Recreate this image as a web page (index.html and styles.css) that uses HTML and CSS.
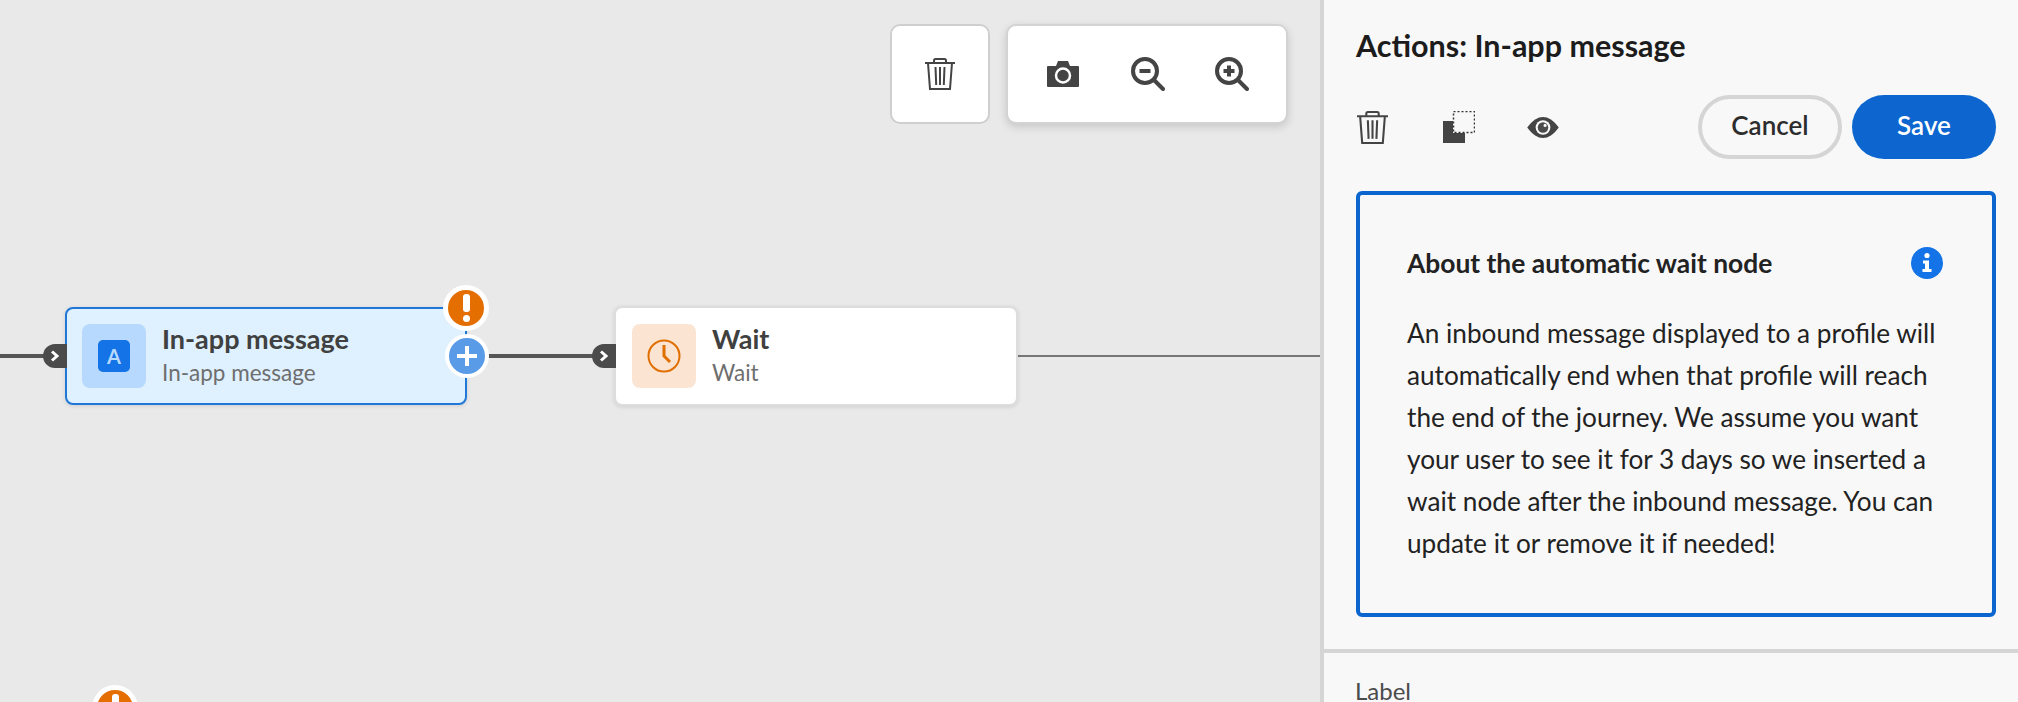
FILE: index.html
```html
<!DOCTYPE html>
<html>
<head>
<meta charset="utf-8">
<meta name="viewport" content="width=device-width, initial-scale=1">
<title>Journey canvas</title>
<link rel="stylesheet" href="styles.css">
</head>
<body>
<main class="canvas">
  <div class="tools">
    <div class="tool-box tool-single">
      <svg class="ico-trash" width="30" height="32" viewBox="0 0 30 32"><path d="M0 5H30M9 5V2.500Q9 1 10.500 1H19.500Q21 1 21 2.500V5M3 5L5 31H25L27 5M10.500 9L11.200 27M15 9V27M19.500 9L18.800 27"/></svg>
    </div>
    <div class="tool-box tool-group">
      <svg width="32" height="26" viewBox="0 0 32 26"><path class="fill" d="M0 6Q0 5 1 5H9L11 0H21L23 5H31Q32 5 32 6V25Q32 26 31 26H1Q0 26 0 25Z"/><circle cx="16" cy="14.500" r="7" fill="none" stroke="#fff" stroke-width="2.500"/></svg>
      <svg class="ico-zoom" width="34" height="34" viewBox="0 0 34 34"><circle cx="14" cy="14" r="12"/><path d="M23 23L32 32"/><path class="mark" d="M8.500 14H19.500"/></svg>
      <svg class="ico-zoom" width="34" height="34" viewBox="0 0 34 34"><circle cx="14" cy="14" r="12"/><path d="M23 23L32 32"/><path class="mark" d="M8.500 14H19.500M14 8.500V19.500"/></svg>
    </div>
  </div>

  <div class="line line-a"></div>
  <div class="line line-b"></div>
  <div class="line line-c"></div>

  <div class="node node-message">
    <span class="pill"><svg width="10" height="12" viewBox="0 0 10 12"><path d="M2 1.500L7 6L2 10.500"/></svg></span>
    <div class="node-icon"><span class="app-a">A</span></div>
    <div class="node-text">
      <div class="node-title">In-app message</div>
      <div class="node-sub">In-app message</div>
    </div>
  </div>

  <div class="node node-wait">
    <span class="pill"><svg width="10" height="12" viewBox="0 0 10 12"><path d="M2 1.500L7 6L2 10.500"/></svg></span>
    <div class="node-icon">
      <svg class="ico-clock" width="34" height="34" viewBox="0 0 34 34"><circle cx="17" cy="17" r="15.500"/><path d="M17 6V17L23 23"/></svg>
    </div>
    <div class="node-text">
      <div class="node-title">Wait</div>
      <div class="node-sub">Wait</div>
    </div>
  </div>

  <span class="alert alert-node"><span class="alert-bar"></span><span class="alert-dot"></span></span>
  <span class="alert alert-low"><span class="alert-bar"></span><span class="alert-dot"></span></span>
  <span class="plus"><svg width="22" height="22" viewBox="0 0 22 22"><path d="M11 1V21M1 11H21"/></svg></span>
</main>

<aside class="panel">
  <div class="panel-head">
    <h1>Actions: In-app message</h1>
    <div class="panel-actions">
      <svg class="ico-trash" width="31" height="33" viewBox="0 0 30 32"><path d="M0 5H30M9 5V2.500Q9 1 10.500 1H19.500Q21 1 21 2.500V5M3 5L5 31H25L27 5M10.500 9L11.200 27M15 9V27M19.500 9L18.800 27"/></svg>
      <svg class="ico-copy" width="32" height="32" viewBox="0 0 32 32"><path class="fill" d="M0 10H10V22H22V32H0Z"/><rect x="10.500" y="0.500" width="21" height="21" fill="none" stroke="#333" stroke-width="1.500" stroke-dasharray="2 2"/></svg>
      <svg class="ico-eye" width="32" height="21" viewBox="0 0 30 20"><path class="fill" d="M0 10C5 3 10 0 15 0S25 3 30 10C25 17 20 20 15 20S5 17 0 10Z"/><circle cx="15" cy="10" r="7" fill="#f8f8f8"/><circle cx="15" cy="10" r="5" fill="#4b4b4b"/><circle cx="17" cy="8" r="1.500" fill="#f8f8f8"/></svg>
      <button class="btn btn-cancel" type="button">Cancel</button>
      <button class="btn btn-save" type="button">Save</button>
    </div>
    <section class="about">
      <div class="about-head">
        <h2>About the automatic wait node</h2>
        <svg width="32" height="32" viewBox="0 0 32 32"><circle cx="16" cy="16" r="16" fill="#1473e6"/><circle cx="16" cy="8.500" r="2.600" fill="#fff"/><path d="M12 13.500H18V22H20.500V25H11.500V22H14V16.500H12Z" fill="#fff"/></svg>
      </div>
      <p>An inbound message displayed to a profile will automatically end when that profile will reach the end of the journey. We assume you want your user to see it for 3 days so we inserted a wait node after the inbound message. You can update it or remove it if needed!</p>
    </section>
  </div>
  <div class="panel-form">
    <label class="field-label">Label</label>
  </div>
</aside>
</body>
</html>
```

FILE: styles.css
```css
* {box-sizing: border-box}

html, body {
  margin: 0;
  height: 702px;
  overflow: hidden;
}

body {
  display: flex;
  font-family: "Lato", "Open Sans", sans-serif;
  background-color: #e9e9e9;
}

svg {
  display: block;
  flex: none;
}

.fill {
  fill: #444;
}

/* canvas */
.canvas {
  position: relative;
  width: 1320px;
  flex: none;
  height: 702px;
  overflow: hidden;
}

.tools {
  position: absolute;
  top: 24px;
  right: 32px;
  display: flex;
  gap: 16px;
}

.tool-box {
  height: 100px;
  display: flex;
  align-items: center;
  justify-content: center;
  background-color: #fff;
  border: 2px solid #cfcfcf;
  border-radius: 10px;
}

.tool-single {
  width: 100px;
}

.tool-group {
  width: 282px;
  gap: 50px;
  padding-left: 2px;
  border-color: #d3d3d3;
  box-shadow: 0 3px 8px rgba(0, 0, 0, 0.15);
}

.tool-group svg:first-child {
  margin-right: 2px;
}

.ico-trash path {
  fill: none;
  stroke: #444;
  stroke-width: 2;
}

.ico-zoom circle, .ico-zoom path {
  fill: none;
  stroke: #444;
  stroke-width: 4;
  stroke-linecap: round;
}

.ico-zoom .mark {
  stroke-linecap: butt;
}

.line {
  position: absolute;
  background-color: #555;
}

.line-a {
  left: 0;
  top: 354px;
  width: 46px;
  height: 4px;
}

.line-b {
  left: 486px;
  top: 354px;
  width: 110px;
  height: 4px;
}

.line-c {
  left: 1016px;
  top: 355px;
  width: 304px;
  height: 2px;
  background-color: #777;
}

.node {
  position: absolute;
  display: flex;
  align-items: center;
  gap: 16px;
  padding: 0 15px;
  border: 2px solid #ddd;
  border-radius: 8px;
  background-color: #fff;
  box-shadow: 0 1px 4px rgba(0, 0, 0, 0.12);
}

.node-message {
  left: 65px;
  top: 307px;
  width: 402px;
  height: 98px;
  background-color: #dff0ff;
  border-color: #1f78d8;
}

.node-wait {
  left: 614px;
  top: 306px;
  width: 404px;
  height: 100px;
  padding-left: 16px;
}

.pill {
  position: absolute;
  left: -24px;
  top: 36px;
  width: 24px;
  height: 24px;
  display: flex;
  align-items: center;
  justify-content: center;
  background-color: #4b4b4b;
  border-radius: 12px 0 0 12px;
}

.node-message .pill {
  top: 35px;
}

.pill path {
  fill: none;
  stroke: #fff;
  stroke-width: 3;
}

.node-icon {
  width: 64px;
  height: 64px;
  flex: none;
  display: flex;
  align-items: center;
  justify-content: center;
  border-radius: 8px;
  background-color: #b6d9fd;
}

.node-wait .node-icon {
  background-color: #fbe4d2;
}

.app-a {
  width: 32px;
  height: 32px;
  display: flex;
  align-items: center;
  justify-content: center;
  border-radius: 5px;
  background-color: #1473e6;
  color: #b6d9fd;
  font-size: 20px;
  font-weight: 700;
}

.ico-clock circle, .ico-clock path {
  fill: none;
  stroke: #e06f00;
  stroke-width: 2;
}

.ico-clock path {
  stroke-width: 3;
}

.node-title {
  color: #404040;
  font-size: 27px;
  line-height: 34px;
  font-weight: 700;
  margin-top: -3px;
}

.node-sub {
  color: #6e6e6e;
  font-size: 22.500px;
  line-height: 30px;
  margin-top: 2px;
}

.alert {
  position: absolute;
  width: 46px;
  height: 46px;
  display: flex;
  flex-direction: column;
  align-items: center;
  justify-content: center;
  gap: 3px;
  border: 5px solid #fff;
  border-radius: 50%;
  background-color: #e46f00;
}

.alert-node {
  left: 443px;
  top: 285px;
}

.alert-low {
  left: 92px;
  top: 685px;
}

.alert-bar {
  width: 7px;
  height: 18px;
  background-color: #fff;
  border-radius: 3px;
}

.alert-dot {
  width: 7px;
  height: 7px;
  background-color: #fff;
  border-radius: 50%;
}

.plus {
  position: absolute;
  left: 445px;
  top: 334px;
  width: 44px;
  height: 44px;
  display: flex;
  align-items: center;
  justify-content: center;
  border: 4px solid #fff;
  border-radius: 50%;
  background-color: #5a9be8;
}

.plus path {
  stroke: #fff;
  stroke-width: 4;
}

/* right panel */
.panel {
  flex: 1;
  height: 702px;
  background-color: #f8f8f8;
  border-left: 4px solid #d5d5d5;
}

.panel-head {
  height: 653px;
  padding: 25px 22px 0 32px;
  border-bottom: 4px solid #d5d5d5;
}

h1 {
  margin: 0;
  color: #1c1c1c;
  font-size: 30.500px;
  line-height: 40px;
  font-weight: 700;
}

.panel-actions {
  display: flex;
  align-items: center;
  margin-top: 30px;
  height: 64px;
  padding-left: 1px;
}

.ico-copy {
  margin-left: 55px;
}

.ico-eye {
  margin-left: 52px;
}

.btn {
  height: 64px;
  padding: 0 0 5px;
  border-radius: 32px;
  font-family: inherit;
  font-size: 26px;
  font-weight: 600;
  cursor: pointer;
}

.btn-cancel {
  width: 144px;
  margin-left: auto;
  background-color: #f8f8f8;
  color: #2c2c2c;
  border: 4px solid #d5d5d5;
}

.btn-save {
  width: 144px;
  margin-left: 10px;
  background-color: #0d66d0;
  color: #fff;
  border: none;
}

.about {
  margin-top: 32px;
  height: 426px;
  padding: 52px 34px 0 47px;
  border: 4px solid #0d66d0;
  border-radius: 6px;
}

.about-head {
  display: flex;
  align-items: center;
  justify-content: space-between;
  margin-right: 15px;
}

h2 {
  margin: 0;
  color: #222;
  font-size: 26.400px;
  font-weight: 700;
}

.about p {
  width: 545px;
  margin: 33px 0 0;
  color: #222;
  font-size: 26.200px;
  line-height: 42px;
}

.panel-form {
  padding: 23px 31px 0;
}

.field-label {
  display: block;
  color: #4b4b4b;
  font-size: 24px;
  line-height: 30px;
}
```
